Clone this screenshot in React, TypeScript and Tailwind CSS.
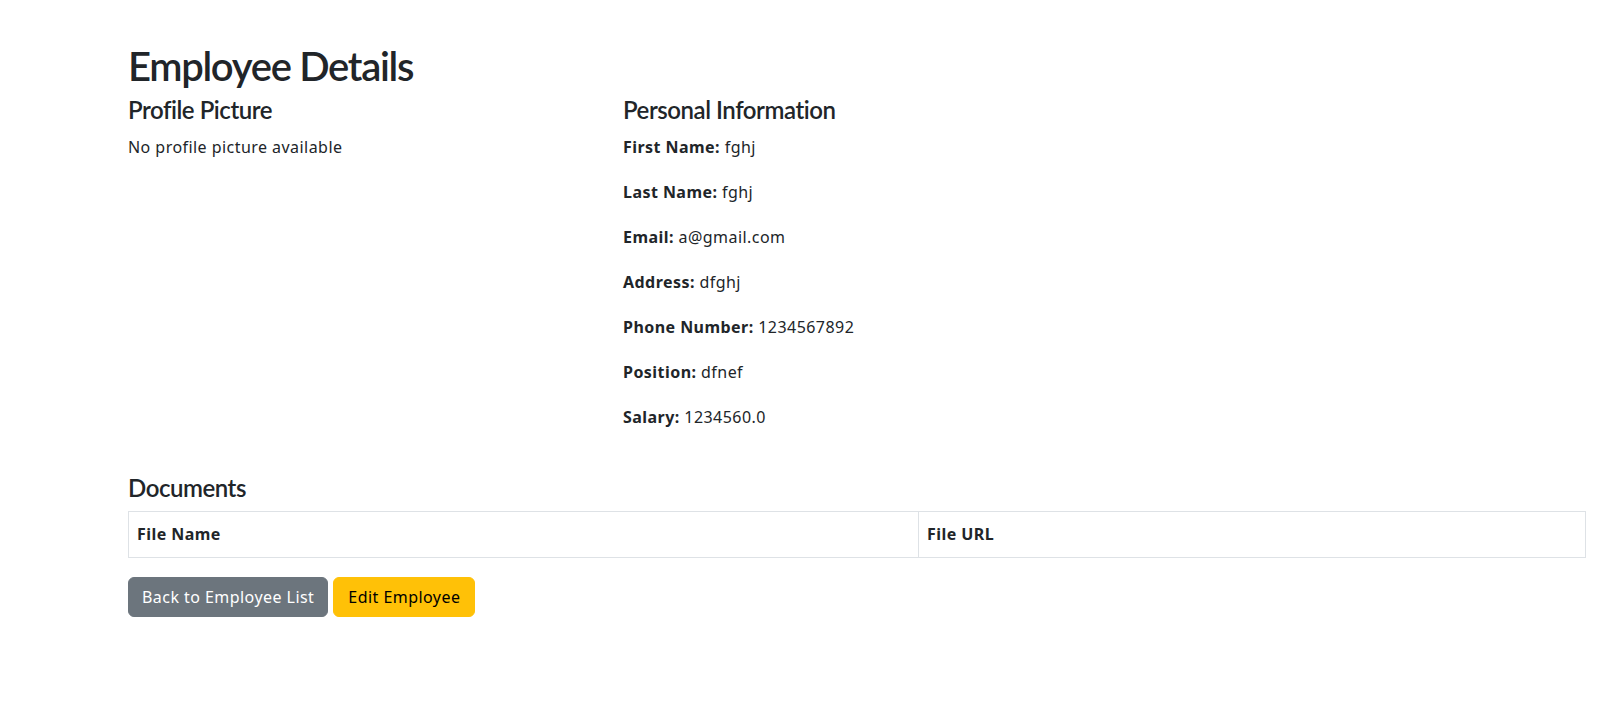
const fields = [
  { label: 'First Name:', value: 'fghj' },
  { label: 'Last Name:', value: 'fghj' },
  { label: 'Email:', value: 'a@gmail.com' },
  { label: 'Address:', value: 'dfghj' },
  { label: 'Phone Number:', value: '1234567892' },
  { label: 'Position:', value: 'dfnef' },
  { label: 'Salary:', value: '1234560.0' },
];

export default function App() {
  return (
    <div className="min-h-[725px] bg-white text-[#212529] font-['Noto_Sans','Open_Sans',sans-serif] tracking-[0.45px]">
      <div className="pl-[128px] pr-[11px] pt-[42px]">
        <h1 className="font-['Lato','Noto_Sans',sans-serif] font-semibold text-[40px] leading-[48px] mb-[5px] tracking-[-1.3px]">
          Employee Details
        </h1>

        <div className="flex">
          <div className="w-[495px]">
            <h4 className="font-['Lato','Noto_Sans',sans-serif] font-semibold text-[24px] leading-[29px] mb-[11px] tracking-[-0.45px]">
              Profile Picture
            </h4>
            <p className="text-[16px] leading-[24px]">No profile picture available</p>
          </div>
          <div className="flex-1">
            <h4 className="font-['Lato','Noto_Sans',sans-serif] font-semibold text-[24px] leading-[29px] mb-[11px] tracking-[-0.45px]">
              Personal Information
            </h4>
            {fields.map(f => (
              <p key={f.label} className="text-[16px] leading-[24px] mb-[21px]">
                <strong className="font-bold">{f.label}</strong> {f.value}
              </p>
            ))}
          </div>
        </div>

        <h4 className="font-['Lato','Noto_Sans',sans-serif] font-semibold text-[24px] leading-[29px] mt-[23px] mb-[9px] tracking-[-0.45px]">
          Documents
        </h4>
        <table className="w-full border-collapse border border-[#dee2e6] text-[16px]">
          <thead>
            <tr>
              <th className="w-[790px] border border-[#dee2e6] px-2 py-[11px] leading-[23px] text-left font-bold">File Name</th>
              <th className="border border-[#dee2e6] px-2 py-[11px] leading-[23px] text-left font-bold">File URL</th>
            </tr>
          </thead>
          <tbody></tbody>
        </table>

        <div className="mt-[19px] flex gap-[5px]">
          <button className="bg-[#6c757d] text-white border border-[#6c757d] rounded-[6px] px-[13px] py-[7px] text-[16px] leading-[24px]">
            Back to Employee List
          </button>
          <button className="bg-[#ffc107] text-black border border-[#ffc107] rounded-[6px] px-[14px] py-[7px] text-[16px] leading-[24px]">
            Edit Employee
          </button>
        </div>
      </div>
    </div>
  );
}
